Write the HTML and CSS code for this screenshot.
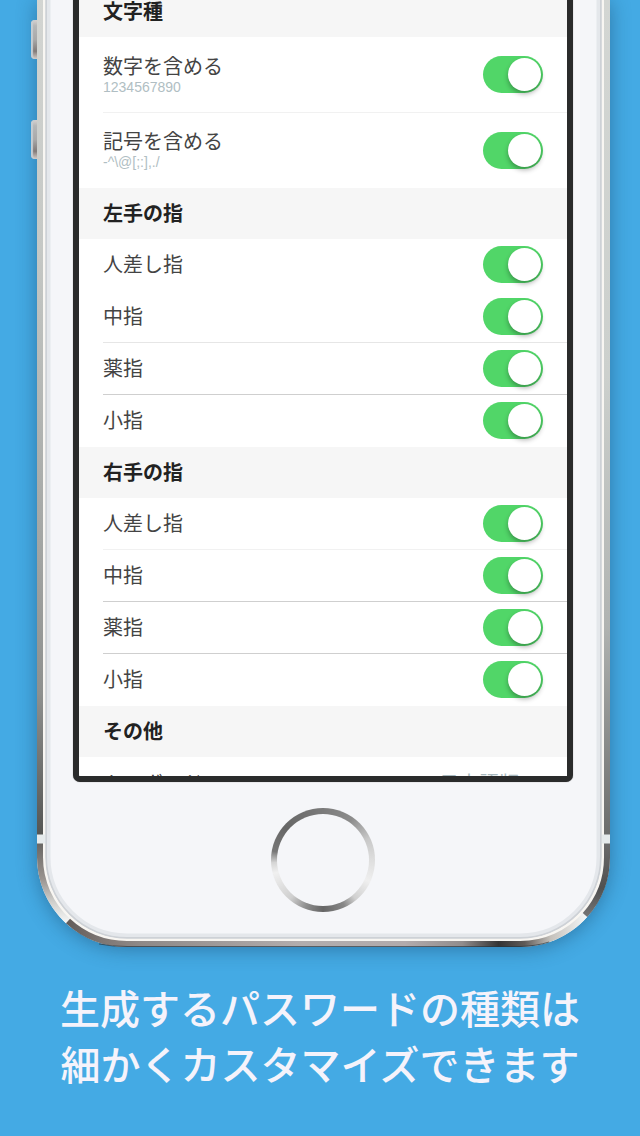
FILE: index.html
```html
<!DOCTYPE html>
<html lang="ja">
<head>
<meta charset="utf-8">
<meta name="viewport" content="width=device-width, initial-scale=1">
<title>パスワードの種類</title>
<link rel="stylesheet" href="styles.css">
</head>
<body>
<main class="page">
  <div class="phone">
    <span class="side-button side-button-up"></span>
    <span class="side-button side-button-down"></span>
    <svg class="frame" viewBox="0 0 573 947" preserveAspectRatio="none" fill="none" aria-hidden="true">
      <defs>
        <linearGradient id="side" gradientUnits="userSpaceOnUse" x1="0" y1="0" x2="0" y2="835">
          <stop offset="0" stop-color="#d3d5d2"/><stop offset=".3" stop-color="#c5c8c5"/><stop offset=".65" stop-color="#a3a6a4"/><stop offset=".83" stop-color="#8e908e"/><stop offset="1" stop-color="#555654"/>
        </linearGradient>
        <linearGradient id="sideR" gradientUnits="userSpaceOnUse" x1="0" y1="0" x2="0" y2="835">
          <stop offset="0" stop-color="#d3d6d3"/><stop offset=".45" stop-color="#ccd0cd"/><stop offset=".75" stop-color="#b0b3b1"/><stop offset="1" stop-color="#6c6d6c"/>
        </linearGradient>
        <linearGradient id="cornerL" gradientUnits="userSpaceOnUse" x1="0" y1="843" x2="0" y2="922">
          <stop offset="0" stop-color="#686663"/><stop offset=".45" stop-color="#99938f"/><stop offset=".75" stop-color="#d0d0cd"/><stop offset="1" stop-color="#f4f5f4"/>
        </linearGradient>
        <linearGradient id="cornerR" gradientUnits="userSpaceOnUse" x1="0" y1="843" x2="0" y2="918">
          <stop offset="0" stop-color="#6b6b6b"/><stop offset=".6" stop-color="#505050"/><stop offset="1" stop-color="#777"/>
        </linearGradient>
        <linearGradient id="base" gradientUnits="userSpaceOnUse" x1="30" y1="0" x2="550" y2="0">
          <stop offset="0" stop-color="#635c59"/><stop offset=".07" stop-color="#7e7774"/><stop offset=".14" stop-color="#8e8987"/><stop offset=".45" stop-color="#b2adad"/><stop offset=".65" stop-color="#b2abac"/><stop offset=".76" stop-color="#918d8d"/><stop offset=".83" stop-color="#343434"/><stop offset=".88" stop-color="#5f5a57"/><stop offset=".93" stop-color="#c5c1bb"/><stop offset="1" stop-color="#f4f7f8"/>
        </linearGradient>
      </defs>
      <path d="M0 0V857A90 90 0 0 0 90 947H483A90 90 0 0 0 573 857V0Z" fill="#f5f6f9"/>
      <path d="M11 0V857A79 79 0 0 0 90 936H483A79 79 0 0 0 562 857V0" stroke="#e4e7eb" stroke-width="5"/>
      <path d="M9 0V857A81 81 0 0 0 90 938H483A81 81 0 0 0 564 857V0" stroke="#cdd1d6" stroke-width="2"/>
      <path d="M7 0V857A83 83 0 0 0 90 940H483A83 83 0 0 0 566 857V0" stroke="#f8f6f2" stroke-width="2.5"/>
      <path d="M3 0V835" stroke="url(#side)" stroke-width="6"/>
      <path d="M570 0V835" stroke="url(#sideR)" stroke-width="6"/>
      <path d="M3 843V857A87 87 0 0 0 31 921" stroke="url(#cornerL)" stroke-width="6"/>
      <path d="M31 921A87 87 0 0 0 90 944H483A87 87 0 0 0 548 915" stroke="url(#base)" stroke-width="6"/>
      <path d="M570 843V857A87 87 0 0 1 548 915" stroke="url(#cornerR)" stroke-width="6"/>
      <path d="M0 839H8M565 839H573" stroke="#e6ebec" stroke-width="9"/>
      <path d="M62 944Q75 946.500 90 946.500H483Q500 946 512 942" stroke="#26333a" stroke-opacity=".65"/>
    </svg>
    <div class="screen">
      <form class="settings">
        <h2 class="heading">文字種</h2>
        <label class="row row-tall line-faint"><span class="text"><span class="name">数字を含める</span><span class="sample">1234567890</span></span><input class="switch" type="checkbox" role="switch" checked></label>
        <label class="row row-tall"><span class="text"><span class="name">記号を含める</span><span class="sample">-^\@[;:],./</span></span><input class="switch" type="checkbox" role="switch" checked></label>
        <h2 class="heading">左手の指</h2>
        <label class="row"><span class="name">人差し指</span><input class="switch" type="checkbox" role="switch" checked></label>
        <label class="row line-light"><span class="name">中指</span><input class="switch" type="checkbox" role="switch" checked></label>
        <label class="row line"><span class="name">薬指</span><input class="switch" type="checkbox" role="switch" checked></label>
        <label class="row"><span class="name">小指</span><input class="switch" type="checkbox" role="switch" checked></label>
        <h2 class="heading">右手の指</h2>
        <label class="row line-faint"><span class="name">人差し指</span><input class="switch" type="checkbox" role="switch" checked></label>
        <label class="row line"><span class="name">中指</span><input class="switch" type="checkbox" role="switch" checked></label>
        <label class="row line"><span class="name">薬指</span><input class="switch" type="checkbox" role="switch" checked></label>
        <label class="row"><span class="name">小指</span><input class="switch" type="checkbox" role="switch" checked></label>
        <h2 class="heading">その他</h2>
        <button class="row row-peek" type="button"><span class="name">キーボード</span><span class="value">日本語版<svg class="chevron" viewBox="0 0 8 16" fill="none" aria-hidden="true"><path d="M1 1L7 8L1 15" stroke="#b9c2c6" stroke-width="2"/></svg></span></button>
      </form>
    </div>
    <button class="home" type="button" aria-label="ホーム"></button>
  </div>
  <p class="caption">生成するパスワードの種類は<br>細かくカスタマイズできます</p>
</main>
</body>
</html>
```

FILE: styles.css
```css
* {
  box-sizing: border-box;
}

body {
  margin: 0;
  background: #44aae4;
  font-family: "Liberation Sans", "Noto Sans CJK JP", sans-serif;
  color: #444;
}

.page {
  min-height: 100vh;
  padding: 0 30px 0 37px;
  overflow: hidden;
}

.phone {
  position: relative;
  display: flex;
  flex-direction: column;
  align-items: center;
  padding: 0 37px 35px 36px;
  border-radius: 0 0 90px 90px;
  box-shadow: 0 2px 20px rgba(20, 60, 90, 0.45);
}

.frame {
  position: absolute;
  inset: 0;
  width: 100%;
  height: 100%;
}

.side-button {
  position: absolute;
  left: -6px;
  width: 7px;
  height: 39px;
  border-radius: 4px 0 0 4px;
  background: linear-gradient(#d9d2cf, #b5b7b8 15%, #a9a9a9 50%, #817b79 80%, #d5cbc6);
  box-shadow: inset 2px 0 1px #c4cdd2;
}

.side-button-up {
  top: 20px;
}

.side-button-down {
  top: 120px;
}

.screen {
  position: relative;
  width: 100%;
  overflow: hidden;
  background: #fff;
  border: 6px solid #2a2b2b;
  border-top: 0;
  border-radius: 0 0 7px 7px;
  box-shadow: 0 0 1px #777;
}

.settings {
  margin-top: -14px;
}

.heading {
  display: flex;
  align-items: center;
  height: 51px;
  margin: 0;
  padding: 1px 24px 0;
  background: #f6f6f6;
  color: #222;
  font-size: 20px;
  line-height: 28px;
  font-weight: 700;
}

.row {
  display: flex;
  align-items: center;
  justify-content: space-between;
  height: 52px;
  margin-left: 24px;
  padding-right: 24px;
  border-bottom: 1px solid transparent;
}

.row-tall {
  height: 75px;
}

.row-tall.line-faint {
  height: 76px;
}

.line-faint {
  border-color: #f1f1f1;
}

.line-light {
  border-color: #e6e6e6;
}

.line {
  border-color: #cfcfcf;
}

.text {
  display: flex;
  flex-direction: column;
}

.name {
  font-size: 20px;
  line-height: 24px;
}

.sample {
  color: #b0bec3;
  font-size: 14px;
  line-height: 16px;
}

.switch {
  appearance: none;
  flex: none;
  width: 60px;
  height: 37px;
  margin: 0;
  padding: 2px;
  border-radius: 19px;
  background: #bbb;
}

.switch::before {
  content: "";
  display: block;
  width: 33px;
  height: 33px;
  border-radius: 50%;
  background: #fff;
  box-shadow: 0 3px 5px rgba(0, 0, 0, 0.3);
}

.switch:checked {
  background: #51d668;
}

.switch:checked::before {
  margin-left: auto;
}

.row-peek {
  align-items: flex-start;
  width: calc(100% - 24px);
  height: 19px;
  padding: 15px 24px 0 0;
  border: 0;
  background: none;
  color: inherit;
  font-family: inherit;
  overflow: hidden;
}

.value {
  display: flex;
  align-items: center;
  gap: 16px;
  color: #a9b9be;
  font-size: 20px;
  line-height: 24px;
}

.chevron {
  width: 8px;
  height: 16px;
}

.home {
  position: relative;
  width: 104px;
  height: 104px;
  margin-top: 26px;
  padding: 0;
  border: 6px solid transparent;
  border-radius: 50%;
  background:
    linear-gradient(#f5f6f9, #f5f6f9) padding-box,
    conic-gradient(#7b7b7b, #8c8c8c 35deg, #c8c8c8 65deg, #dedede 90deg, #efefef 115deg, #d0d0d0 140deg, #888 155deg, #666 180deg, #8d8d8d 200deg, #cfcfcf 220deg, #f0f0f0 255deg, #d5d5d5 267deg, #777 280deg, #666 310deg, #707070 335deg, #7b7b7b) border-box;
}

.caption {
  margin: 35px -30px 0 -37px;
  color: #f5f3fb;
  font-size: 40px;
  font-weight: 500;
  line-height: 56px;
  text-align: center;
}
```
